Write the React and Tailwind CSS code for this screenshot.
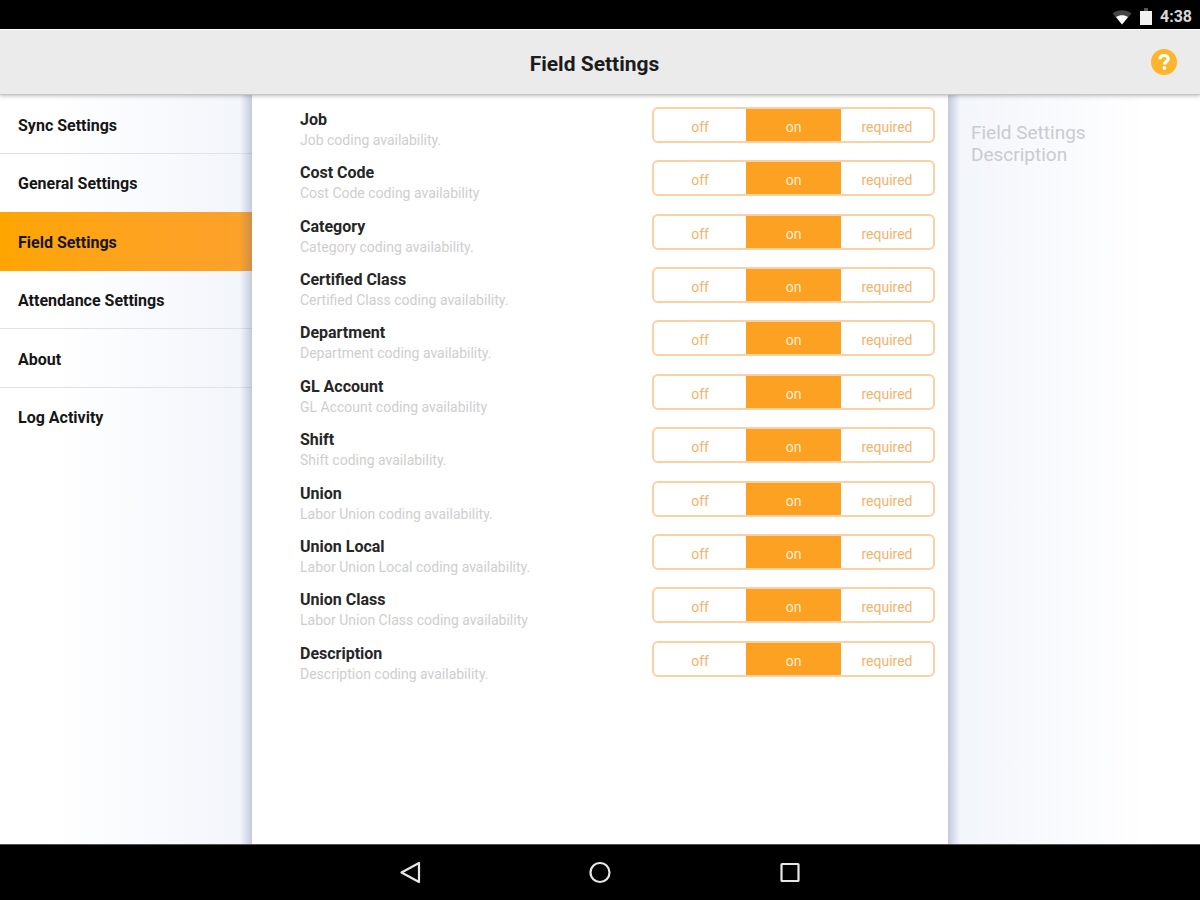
import { useState } from "react";

const sections = [
  "Sync Settings",
  "General Settings",
  "Field Settings",
  "Attendance Settings",
  "About",
  "Log Activity",
];

const fields = [
  { name: "Job", note: "Job coding availability." },
  { name: "Cost Code", note: "Cost Code coding availability" },
  { name: "Category", note: "Category coding availability." },
  { name: "Certified Class", note: "Certified Class coding availability." },
  { name: "Department", note: "Department coding availability." },
  { name: "GL Account", note: "GL Account coding availability" },
  { name: "Shift", note: "Shift coding availability." },
  { name: "Union", note: "Labor Union coding availability." },
  { name: "Union Local", note: "Labor Union Local coding availability." },
  { name: "Union Class", note: "Labor Union Class coding availability" },
  { name: "Description", note: "Description coding availability." },
];

const options = ["off", "on", "required"];

function StatusBar() {
  return (
    <div className="flex h-[29px] shrink-0 items-center justify-end bg-black pt-1 pr-2 text-white">
      <svg className="mr-2 h-4 w-5" viewBox="0 0 20 16" aria-hidden="true">
        <path d="M.5 4.500C6 .1 14 .1 19.500 4.500L10 15.500Z" fill="#454545" />
        <path d="M4 8C7.500 5.500 12.500 5.500 16 8L10 15.500Z" fill="#fff" />
      </svg>
      <svg className="mr-2 h-[18px] w-3" viewBox="0 0 12 18" aria-hidden="true">
        <path d="M4 0h4v3H4Z" fill="#555" />
        <path d="M0 3h12v14H0Z" fill="#f2f2f2" />
      </svg>
      <span className="text-base leading-4 font-bold text-[#d8d8d8]">4:38</span>
    </div>
  );
}

function Header() {
  return (
    <header className="relative z-10 grid h-[66px] shrink-0 grid-cols-[1fr_auto_1fr] items-center border-t border-b border-t-white border-b-[#c6c6c6] bg-[#ebebeb] pr-[23px] pl-3 shadow-[0_1px_4px_rgba(0,0,0,0.25)]">
      <h1 className="col-start-2 pt-1 text-[21px] leading-6 font-bold text-[#1c1c1c]">Field Settings</h1>
      <button
        type="button"
        aria-label="Help"
        className="flex size-[26px] items-center justify-center justify-self-end rounded-full bg-[#fdb52b]"
      >
        <svg className="size-[26px]" viewBox="0 0 26 26" fill="none" aria-hidden="true">
          <path
            d="M9 10.200C9 7.800 10.800 6.500 13.200 6.500C15.600 6.500 17.300 7.900 17.300 9.800C17.300 12.300 13.400 12.500 13.400 15.600"
            stroke="#fff"
            strokeWidth="3.200"
          />
          <circle cx="13.400" cy="19" r="1.900" fill="#fff" />
        </svg>
      </button>
    </header>
  );
}

function Sidebar() {
  return (
    <nav
      aria-label="Settings"
      className="relative w-[21%] shrink-0 bg-linear-to-r from-white from-20% to-[#f2f5fb]"
    >
      <ul className="grid min-h-[351px] auto-rows-fr">
        {sections.map((name) => {
          const active = name === "Field Settings";
          return (
            <li key={name} className="grid">
              <a
                href="#"
                aria-current={active ? "page" : undefined}
                className={
                  "flex items-center border-b pt-1 pl-[18px] text-base font-bold text-[#161616] " +
                  (active
                    ? "border-transparent bg-linear-to-r from-[#ffa500] to-[#fca12b] bg-origin-border"
                    : name === "Log Activity" || name === "General Settings"
                      ? "border-transparent"
                      : "border-[#dfe1e6]")
                }
              >
                {name}
              </a>
            </li>
          );
        })}
      </ul>
      <div className="pointer-events-none absolute inset-y-0 right-0 w-3 bg-linear-to-r from-transparent to-[#5a6496]/30" />
    </nav>
  );
}

function Segmented({ label, value, onChange }) {
  return (
    <div
      role="group"
      aria-label={label}
      className="grid h-9 w-[283px] shrink-0 grid-cols-[1fr_95px_1fr] overflow-hidden rounded-md border-2 border-[#fbd0a2]"
    >
      {options.map((option) => (
        <button
          key={option}
          type="button"
          aria-pressed={value === option}
          onClick={() => onChange(option)}
          className={
            "pt-1 text-sm leading-5 " +
            (value === option ? "bg-[#fca121] text-[#fff0d9]" : "text-[#f5b26c]")
          }
        >
          {option}
        </button>
      ))}
    </div>
  );
}

function FieldList() {
  const [values, setValues] = useState(() => fields.map(() => "on"));
  return (
    <main className="min-w-0 flex-1 bg-white pt-3 pr-[13px] pl-12">
      <ul className="grid min-h-[587px] auto-rows-fr">
        {fields.map((field, i) => (
          <li key={field.name} className="flex items-start justify-between">
            <div>
              <h2 className="pt-px text-base leading-6 font-bold text-[#262626]">{field.name}</h2>
              <p className="text-sm leading-4 text-[#cecece]">{field.note}</p>
            </div>
            <Segmented
              label={field.name}
              value={values[i]}
              onChange={(next) => setValues(values.map((v, j) => (j === i ? next : v)))}
            />
          </li>
        ))}
      </ul>
    </main>
  );
}

function Description() {
  return (
    <aside className="relative w-[21%] shrink-0 bg-linear-to-r from-[#f2f5fb] to-white to-80% pt-[27px] pr-20 pl-[23px]">
      <div className="pointer-events-none absolute inset-y-0 left-0 w-3 bg-linear-to-l from-transparent to-[#5a6496]/30" />
      <p className="text-[19px] leading-[22px] text-[#c8cbd0]">Field Settings Description</p>
    </aside>
  );
}

function NavigationBar() {
  return (
    <div className="flex h-14 shrink-0 items-center justify-center gap-[166px] border-t border-[#555] bg-black">
      <button type="button" aria-label="Back">
        <svg className="size-6" viewBox="0 0 24 24" fill="none" aria-hidden="true">
          <path d="M3.500 11.500L21 2V21Z" stroke="#e6e6e6" strokeWidth="2.200" strokeLinejoin="round" />
        </svg>
      </button>
      <button type="button" aria-label="Home">
        <svg className="size-6" viewBox="0 0 24 24" fill="none" aria-hidden="true">
          <circle cx="12" cy="11.500" r="9.500" stroke="#e6e6e6" strokeWidth="2.200" />
        </svg>
      </button>
      <button type="button" aria-label="Recent apps">
        <svg className="size-6" viewBox="0 0 24 24" fill="none" aria-hidden="true">
          <rect x="3.500" y="3" width="17" height="17" stroke="#e6e6e6" strokeWidth="2.200" rx=".5" />
        </svg>
      </button>
    </div>
  );
}

export default function App() {
  return (
    <div className="flex min-h-screen flex-col bg-white font-[Roboto,'Liberation_Sans',sans-serif]">
      <StatusBar />
      <Header />
      <div className="flex flex-1">
        <Sidebar />
        <FieldList />
        <Description />
      </div>
      <NavigationBar />
    </div>
  );
}
